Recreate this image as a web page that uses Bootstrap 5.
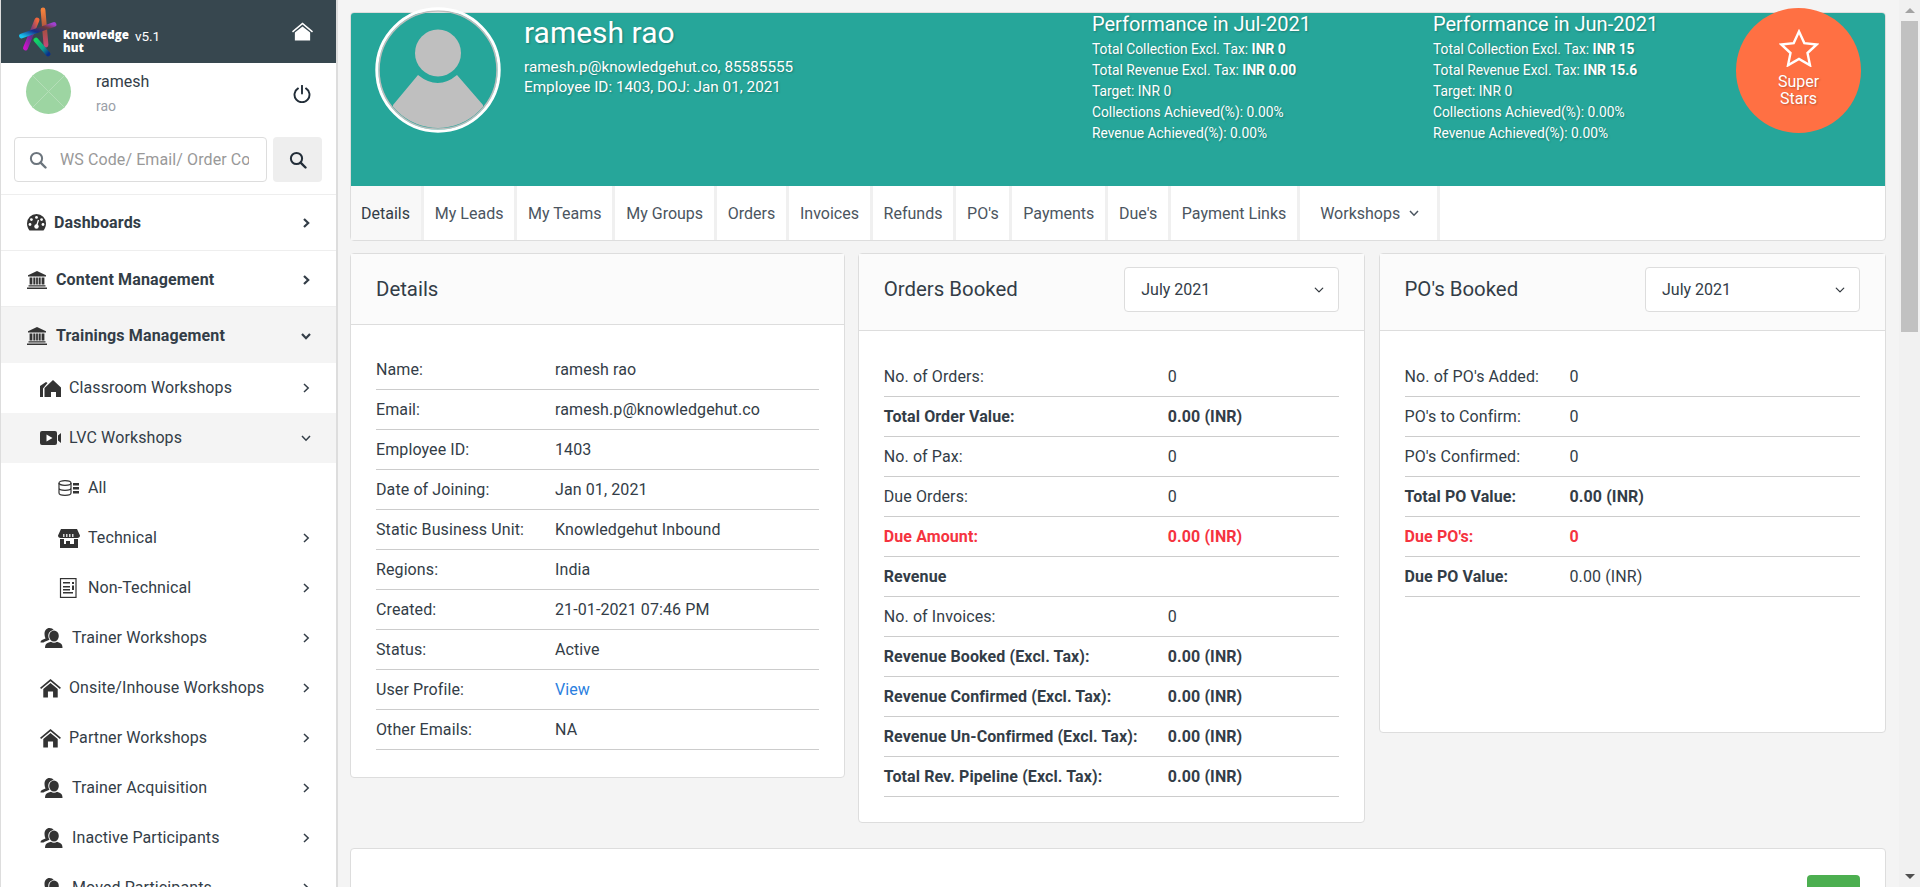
<!DOCTYPE html>
<html lang="en">
<head>
  <meta charset="UTF-8">
  <title>Employee Details</title>
  <link href="https://cdn.jsdelivr.net/npm/bootstrap@5.3.3/dist/css/bootstrap.min.css" rel="stylesheet">
  <style>
    body { font-family: Roboto, "Liberation Sans", sans-serif; font-size: 16px; color: #333d47; background: #f4f4f4; height: 887px; overflow: hidden; }
    svg { display: block; flex: none; }

    /* sidebar */
    .side-wrap { width: 338px; flex: none; height: 887px; background: #fff; border-left: 1px solid #ddd; border-right: 2px solid #ddd; overflow: hidden; }
    .side-top { height: 63px; background: #37474f; margin-left: -1px; padding: 0 23px 0 18px; }
    .logo-name { color: #fff; font-family: "Open Sans", sans-serif; font-weight: 800; font-size: 11.6px; line-height: 13px; margin-left: 3px; margin-top: 18px; }
    .logo-ver { color: #fff; font-size: 13.5px; margin-left: 6px; margin-top: 9px; }
    .user-box { padding: 6px 25px 0 25px; height: 74px; }
    .user-pic { width: 45px; height: 45px; border-radius: 50%; background: #9dd5a2; overflow: hidden; }
    .user-name { margin-left: 25px; line-height: 22px; margin-top: 2px; }
    .user-sub { font-size: 14px; color: #9aa0a8; margin-top: 3px; line-height: 20px; }
    .power-ico { margin-top: 16px; }
    .search-box { padding: 0 14px 12px 13px; border-bottom: 1px solid #eee; }
    .search-field { position: relative; width: 254px; }
    .search-field svg { position: absolute; left: 15px; top: 14px; }
    .search-field .form-control { height: 45px; padding: 0 17px 0 45px; font-size: 16px; letter-spacing: .1px; border-color: #ddd; border-radius: 4px; color: #333; }
    .search-field .form-control::placeholder { color: #999; opacity: 1; }
    .search-btn { width: 49px; height: 45px; background: #eee; border: 0; border-radius: 4px; margin-left: 6px; }
    .side-item { height: 50px; padding-right: 24px; color: #333d47; text-decoration: none; letter-spacing: .1px; }
    .side-item:hover { color: #333d47; }
    .side-item .arrow { margin-left: auto; }
    .top-level { height: 56px; padding-left: 26px; font-weight: 700; letter-spacing: .15px; border-bottom: 1px solid #eee; }
    .top-bank { padding-top: 2px; }
    .top-open { height: 56px; background: #f4f4f4; border-bottom: 0; }
    .sub-level { padding-left: 39px; }
    .sub-open { background: #f4f4f4; }
    .third-level { padding-left: 57px; }
    .ico-gap { margin-right: 8px; }
    .ico-gap-wide { margin-right: 9px; }

    /* hero */
    .page-wrap { width: 1561px; flex: none; padding: 12px 13px 0 12px; }
    .profile-card { border: 1px solid #ddd; border-radius: 4px; background: #fff; }
    .profile-band { height: 173px; background: #26a69a; color: #fff; text-shadow: 1px 1px 2px rgba(0,0,0,.25); padding-left: 24px; border-radius: 3px 3px 0 0; }
    .profile-pic { width: 126px; height: 126px; margin-top: -6px; margin-right: 23px; }
    .profile-main { width: 568px; padding-top: 3px; }
    .profile-name { font-size: 30px; line-height: 34px; font-weight: 400; margin: 0 0 7px; }
    .profile-line { line-height: 20px; font-size: 15.3px; }
    .perf-box { margin-top: -1px; font-size: 13.8px; line-height: 21px; }
    .perf-one { width: 341px; }
    .perf-two { width: 303px; }
    .perf-box h5 { font-size: 20px; line-height: 24px; font-weight: 400; margin: 0 0 2.5px; }
    .star-badge { width: 125px; height: 125px; border-radius: 50%; background: #ff7043; margin-top: -5px; font-size: 16px; line-height: 17px; text-align: center; padding-top: 21px; }
    .star-badge svg { margin: 0 auto 6px; }

    /* tabs */
    .tab-strip { height: 54px; }
    .tab-link { padding: 0 10.85px; height: 54px; line-height: 55px; border-right: 3px solid #f0f0f0; color: #4b5560; text-decoration: none; white-space: nowrap; }
    .tab-link:hover { color: #4b5560; }
    .tab-on { background: #f8f8f8; color: #333d47; padding: 0 11px 0 10px; }
    .tab-drop { padding: 0 17px 0 20px; }

    /* cards */
    .stat-grid { display: grid; grid-template-columns: 494.5px 507.5px 507.5px; column-gap: 13.25px; margin-top: 12px; align-items: start; }
    .stat-card { border: 1px solid #ddd; border-radius: 4px; background: #fff; }
    .stat-head { background: #fbfbfb; border-bottom: 1px solid #ddd; padding: 0 25px; height: 71px; font-size: 20.4px; }
    .stat-head-tall { height: 77px; padding-bottom: 5px; }
    .stat-head .form-select { width: 215px; height: 45px; padding-left: 16px; font-size: 16px; color: #333d47; border-color: #ddd; border-radius: 4px; background-size: 14px 10px; }
    .stat-body { padding: 25px 25px 27px; }
    .stat-body-tall { padding: 26px 25px 25px; }
    .stat-body-po { padding-bottom: 135px; }
    .stat-row { height: 40px; line-height: 39px; border-bottom: 1px solid #ccc; white-space: nowrap; letter-spacing: .1px; }
    .key-details { width: 179px; }
    .key-orders { width: 284px; }
    .key-po { width: 165px; }
    .row-bold { font-weight: 700; }
    .row-due { font-weight: 700; color: #f5333f; }
    .view-link { color: #2b7fe0; text-decoration: none; }
    .bottom-card { margin-top: 25px; height: 120px; padding: 26px 25px 0 0; }
    .add-btn { width: 53px; height: 50px; background: #4caf50; border: 0; border-radius: 4px; }

    /* scrollbar */
    .fake-scroll { width: 21px; flex: none; height: 887px; background: #f1f1f1; padding: 0 2px; }
    .scroll-up, .scroll-down { height: 21px; }
    .scroll-up i { border: 5px solid transparent; border-top: 0; border-bottom: 5px solid #a3a3a3; }
    .scroll-down i { border: 5px solid transparent; border-bottom: 0; border-top: 5px solid #505050; }
    .scroll-thumb { height: 311px; background: #c1c1c1; }
  </style>
</head>
<body>

<svg width="0" height="0" class="position-absolute">
  <defs>
    <symbol id="i-chev" viewBox="0 0 12 12"><path d="M4 2l4.200 4L4 10" fill="none" stroke="currentColor" stroke-width="1.500"/></symbol>
    <symbol id="i-chev-b" viewBox="0 0 12 12"><path d="M4 2l4.200 4L4 10" fill="none" stroke="currentColor" stroke-width="2.200"/></symbol>
    <symbol id="i-down" viewBox="0 0 12 12"><path d="M2 4l4 4.200L10 4" fill="none" stroke="currentColor" stroke-width="1.500"/></symbol>
    <symbol id="i-down-b" viewBox="0 0 12 12"><path d="M2 4l4 4.200L10 4" fill="none" stroke="currentColor" stroke-width="2.200"/></symbol>
    <symbol id="i-search" viewBox="0 0 18 18"><circle cx="7.500" cy="7.500" r="5.600" fill="none" stroke="currentColor" stroke-width="2"/><path d="M11.600 11.600L16.500 16.500" stroke="currentColor" stroke-width="2.400" stroke-linecap="round"/></symbol>
    <symbol id="i-bank" viewBox="0 0 20 18"><path fill="currentColor" d="M10 0L19 4.200V5.500H1V4.200zM2.600 6.500h2.800v7H2.600zM6.300 6.500h2.100v7H6.300zM11.600 6.500h2.100v7h-2.100zM14.600 6.500h2.800v7h-2.800zM9.100 6.500h1.800v7H9.100zM1.500 14.300h17v1.300h-17zM0 16.400h20V18H0z"/></symbol>
    <symbol id="i-friends" viewBox="0 0 22 20"><ellipse cx="13.500" cy="8" rx="4.800" ry="5.500" fill="currentColor"/><path fill="currentColor" d="M4.500 20c0-3 1-4.500 3-5.300l3-1c1.500 1.300 4.500 1.300 6 0l2.500 1c2 .8 3 2.300 3 5.300zM9 0c2 0 3.400.9 4.200 2-3.400.3-5.400 3-5.400 6 0 1.500.4 2.800 1.200 3.800l-3.500 1.400c-1 .4-1.800.8-2.500 1.300H0c0-1.500.8-2.300 2-2.800l3-1.200C4.300 9 4 7.500 4 6 4 2.500 6 0 9 0z"/></symbol>
    <symbol id="i-home" viewBox="0 0 22 20"><path fill="currentColor" d="M11 0L22 9.300l-1.100 1.300L11 2.400 1.100 10.600 0 9.300zM11 4.200l7.600 6.300V19.500h-4.900v-6.300H8.300v6.300H3.400v-9z"/></symbol>
  </defs>
</svg>

<div class="d-flex">
  <aside class="side-wrap">
    <div class="side-top d-flex align-items-center">
      <svg width="42" height="50" viewBox="0 0 42 50">
        <defs>
          <linearGradient id="lg1" x1="0" y1="0" x2="0" y2="1"><stop offset="0" stop-color="#f5823c"/><stop offset=".55" stop-color="#a5503f"/><stop offset="1" stop-color="#c24a74"/></linearGradient>
          <linearGradient id="lg2" x1="1" y1="0" x2="0" y2="1"><stop offset="0" stop-color="#f0663c"/><stop offset=".5" stop-color="#5a2f8c"/><stop offset="1" stop-color="#c813c8"/></linearGradient>
          <linearGradient id="lg3" x1="0" y1="1" x2="1" y2="0"><stop offset="0" stop-color="#19c3ee"/><stop offset=".4" stop-color="#14308c"/><stop offset=".75" stop-color="#6e3a3a"/><stop offset="1" stop-color="#a040d0"/></linearGradient>
          <linearGradient id="lg4" x1="0" y1="0" x2="1" y2="1"><stop offset="0" stop-color="#12d860"/><stop offset=".6" stop-color="#0f9f8c"/><stop offset="1" stop-color="#0a2f8c"/></linearGradient>
        </defs>
        <path d="M25 3L28 38" stroke="url(#lg1)" stroke-width="4.800" stroke-linecap="round" fill="none"/>
        <path d="M19 13L7.500 41" stroke="url(#lg2)" stroke-width="4.800" stroke-linecap="round" fill="none"/>
        <path d="M3.500 29L36 17.500" stroke="url(#lg3)" stroke-width="4.800" stroke-linecap="round" fill="none"/>
        <path d="M18 33L30 47" stroke="url(#lg4)" stroke-width="4.800" stroke-linecap="round" fill="none"/>
      </svg>
      <div class="logo-name">knowledge<br>hut</div>
      <div class="logo-ver">v5.1</div>
      <svg class="ms-auto" width="21" height="19" viewBox="0 0 22 19"><path fill="#fff" d="M11 0L22 9.300l-1 1.200L11 2.200 1 10.500 0 9.300zM11 4.200l8 6.300V18.800H3V10.500z"/></svg>
    </div>

    <div class="user-box d-flex">
      <div class="user-pic">
        <svg width="45" height="45" viewBox="0 0 45 45"><path d="M0 0L45 45M45 0L0 45" stroke="#b5deb8" stroke-width="1"/></svg>
      </div>
      <div class="user-name">
        <div>ramesh</div>
        <div class="user-sub">rao</div>
      </div>
      <svg class="ms-auto power-ico" width="18" height="18" viewBox="0 0 18 18"><path d="M5 3.400a7.500 7.500 0 1 0 8 0" fill="none" stroke="#222d38" stroke-width="1.900" stroke-linecap="round"/><path d="M9 .8V8.500" stroke="#222d38" stroke-width="1.900" stroke-linecap="round"/></svg>
    </div>

    <div class="search-box d-flex">
      <div class="search-field">
        <svg width="18" height="18" class="text-secondary"><use href="#i-search"/></svg>
        <input class="form-control" placeholder="WS Code/ Email/ Order Code">
      </div>
      <button class="search-btn d-flex align-items-center justify-content-center" type="button" aria-label="Search">
        <svg width="18" height="18" color="#222d38"><use href="#i-search"/></svg>
      </button>
    </div>

    <nav class="d-flex flex-column">
      <a class="side-item top-level d-flex align-items-center" href="#">
        <svg class="ico-gap" width="19" height="17" viewBox="0 0 19 17"><path fill="#333" d="M9.500 0a9.500 9.500 0 0 1 9.500 9.500c0 2.800-1 5-2.500 7H2.500C1 14.500 0 12.300 0 9.500A9.500 9.500 0 0 1 9.500 0z"/><circle cx="9.500" cy="3.400" r="1.400" fill="#fff"/><circle cx="4.400" cy="5.600" r="1.400" fill="#fff"/><circle cx="14.600" cy="5.600" r="1.400" fill="#fff"/><circle cx="3" cy="10.500" r="1.400" fill="#fff"/><circle cx="16" cy="10.500" r="1.400" fill="#fff"/><circle cx="9.500" cy="12.500" r="2.200" fill="#fff"/><path d="M9.500 12l2-6" stroke="#fff" stroke-width="1.300"/></svg>
        Dashboards
        <svg class="arrow" width="12" height="12"><use href="#i-chev-b"/></svg>
      </a>
      <a class="side-item top-level top-bank d-flex align-items-center" href="#">
        <svg class="ico-gap-wide" width="20" height="18" color="#333"><use href="#i-bank"/></svg>
        Content Management
        <svg class="arrow" width="12" height="12"><use href="#i-chev-b"/></svg>
      </a>
      <a class="side-item top-level top-open top-bank d-flex align-items-center" href="#">
        <svg class="ico-gap-wide" width="20" height="18" color="#333"><use href="#i-bank"/></svg>
        Trainings Management
        <svg class="arrow" width="12" height="12"><use href="#i-down-b"/></svg>
      </a>
      <a class="side-item sub-level d-flex align-items-center" href="#">
        <svg class="ico-gap" width="21" height="17" viewBox="0 0 21 17"><path fill="#333" d="M0 6L6 2l1.500 1L3 8.500V17H0zM13 0l8 7.500V17h-5v-5h-5v5H4.500V8z"/></svg>
        Classroom Workshops
        <svg class="arrow" width="12" height="12"><use href="#i-chev"/></svg>
      </a>
      <a class="side-item sub-level sub-open d-flex align-items-center" href="#">
        <svg class="ico-gap" width="21" height="14" viewBox="0 0 21 14"><path fill="#333" d="M2 0h13a2 2 0 0 1 2 2v10a2 2 0 0 1-2 2H2a2 2 0 0 1-2-2V2a2 2 0 0 1 2-2zM18 4.500L21 2v10l-3-2.500z"/><path fill="#fff" d="M6.500 3.500l6 3.500-6 3.500z"/></svg>
        LVC Workshops
        <svg class="arrow" width="12" height="12"><use href="#i-down"/></svg>
      </a>
      <a class="side-item third-level d-flex align-items-center" href="#">
        <svg class="ico-gap" width="22" height="16" viewBox="0 0 22 16"><g fill="none" stroke="#333" stroke-width="1.200"><ellipse cx="7" cy="3" rx="6" ry="2.300"/><path d="M1 3v10c0 1.300 2.700 2.300 6 2.300s6-1 6-2.300V3M1 8c0 1.300 2.700 2.300 6 2.300s6-1 6-2.300"/></g><path fill="#333" d="M15 3h6v2.500h-6zM15 7h6v2.500h-6zM15 11h6v2.500h-6z"/></svg>
        All
      </a>
      <a class="side-item third-level d-flex align-items-center" href="#">
        <svg class="ico-gap" width="22" height="19" viewBox="0 0 22 19"><path fill="#333" d="M3 0h16l3 6.500c0 1.500-1 2.500-2.500 2.500H2.500C1 9 0 8 0 6.500zM2 10h18v9H2z"/><path fill="#fff" d="M6 10h10v5H6z"/><path fill="#fff" d="M5 5h1.500v3H5zM8 5h1.500v3H8zM11 5h1.500v3H11zM14 5h1.500v3H14z" opacity=".8"/><path fill="#333" d="M8 12h4v3H8z"/></svg>
        Technical
        <svg class="arrow" width="12" height="12"><use href="#i-chev"/></svg>
      </a>
      <a class="side-item third-level d-flex align-items-center" href="#">
        <svg class="ico-gap" width="22" height="20" viewBox="0 0 22 20"><rect x="2.500" y=".6" width="15.500" height="18.800" fill="none" stroke="#333" stroke-width="1.200"/><path fill="#333" d="M5 4h7v1.500H5zM5 8h7v1.500H5zM5 11h7v1.500H5zM5 14h10v1.500H5zM14 4h2v2h-2zM14 7.500h2V12h-2z"/></svg>
        Non-Technical
        <svg class="arrow" width="12" height="12"><use href="#i-chev"/></svg>
      </a>
      <a class="side-item sub-level d-flex align-items-center" href="#">
        <svg class="ico-gap-wide" width="23" height="20" color="#333"><use href="#i-friends"/></svg>
        Trainer Workshops
        <svg class="arrow" width="12" height="12"><use href="#i-chev"/></svg>
      </a>
      <a class="side-item sub-level d-flex align-items-center" href="#">
        <svg class="ico-gap" width="21" height="19" color="#333"><use href="#i-home"/></svg>
        Onsite/Inhouse Workshops
        <svg class="arrow" width="12" height="12"><use href="#i-chev"/></svg>
      </a>
      <a class="side-item sub-level d-flex align-items-center" href="#">
        <svg class="ico-gap" width="21" height="19" color="#333"><use href="#i-home"/></svg>
        Partner Workshops
        <svg class="arrow" width="12" height="12"><use href="#i-chev"/></svg>
      </a>
      <a class="side-item sub-level d-flex align-items-center" href="#">
        <svg class="ico-gap-wide" width="23" height="20" color="#333"><use href="#i-friends"/></svg>
        Trainer Acquisition
        <svg class="arrow" width="12" height="12"><use href="#i-chev"/></svg>
      </a>
      <a class="side-item sub-level d-flex align-items-center" href="#">
        <svg class="ico-gap-wide" width="23" height="20" color="#333"><use href="#i-friends"/></svg>
        Inactive Participants
        <svg class="arrow" width="12" height="12"><use href="#i-chev"/></svg>
      </a>
      <a class="side-item sub-level d-flex align-items-center" href="#">
        <svg class="ico-gap-wide" width="23" height="20" color="#333"><use href="#i-friends"/></svg>
        Moved Participants
        <svg class="arrow" width="12" height="12"><use href="#i-chev"/></svg>
      </a>
    </nav>
  </aside>

  <main class="page-wrap">
    <section class="profile-card">
      <div class="profile-band d-flex">
        <svg class="profile-pic" viewBox="0 0 126 126">
          <defs><clipPath id="picclip"><circle cx="63" cy="63" r="58"/></clipPath></defs>
          <g clip-path="url(#picclip)" fill="#bfbfbf">
            <ellipse cx="63" cy="46" rx="23" ry="23.500"/>
            <path d="M43 68Q63 84 82 68L108 98V126H18V98z"/>
          </g>
          <circle cx="63" cy="63" r="59" fill="none" stroke="#bdbdbd" stroke-width="1.500"/>
          <circle cx="63" cy="63" r="61.200" fill="none" stroke="#fff" stroke-width="3"/>
        </svg>
        <div class="profile-main">
          <h2 class="profile-name">ramesh rao</h2>
          <div class="profile-line">ramesh.p@knowledgehut.co, 85585555</div>
          <div class="profile-line">Employee ID: 1403, DOJ: Jan 01, 2021</div>
        </div>
        <div class="perf-box perf-one">
          <h5>Performance in Jul-2021</h5>
          <div>Total Collection Excl. Tax: <b>INR 0</b></div>
          <div>Total Revenue Excl. Tax: <b>INR 0.00</b></div>
          <div>Target: INR 0</div>
          <div>Collections Achieved(%): 0.00%</div>
          <div>Revenue Achieved(%): 0.00%</div>
        </div>
        <div class="perf-box perf-two">
          <h5>Performance in Jun-2021</h5>
          <div>Total Collection Excl. Tax: <b>INR 15</b></div>
          <div>Total Revenue Excl. Tax: <b>INR 15.6</b></div>
          <div>Target: INR 0</div>
          <div>Collections Achieved(%): 0.00%</div>
          <div>Revenue Achieved(%): 0.00%</div>
        </div>
        <div class="star-badge">
          <svg width="40" height="38" viewBox="0 0 40 38"><path d="M20 2.500l5.300 11.600 12.400 1.400-9.200 8.500 2.500 12.300L20 29.900 9 36.300l2.500-12.300-9.200-8.500 12.400-1.400z" fill="none" stroke="#fff" stroke-width="2.400" stroke-linejoin="miter"/></svg>
          <div>Super<br>Stars</div>
        </div>
      </div>
      <div class="tab-strip d-flex">
        <a class="tab-link tab-on" href="#">Details</a>
        <a class="tab-link" href="#">My Leads</a>
        <a class="tab-link" href="#">My Teams</a>
        <a class="tab-link" href="#">My Groups</a>
        <a class="tab-link" href="#">Orders</a>
        <a class="tab-link" href="#">Invoices</a>
        <a class="tab-link" href="#">Refunds</a>
        <a class="tab-link" href="#">PO's</a>
        <a class="tab-link" href="#">Payments</a>
        <a class="tab-link" href="#">Due's</a>
        <a class="tab-link" href="#">Payment Links</a>
        <a class="tab-link tab-drop d-flex align-items-center gap-2" href="#">Workshops <svg width="12" height="12"><use href="#i-down"/></svg></a>
      </div>
    </section>

    <div class="stat-grid">
      <section class="stat-card">
        <div class="stat-head d-flex align-items-center">Details</div>
        <div class="stat-body">
          <div class="stat-row d-flex"><div class="key-details">Name:</div><div>ramesh rao</div></div>
          <div class="stat-row d-flex"><div class="key-details">Email:</div><div>ramesh.p@knowledgehut.co</div></div>
          <div class="stat-row d-flex"><div class="key-details">Employee ID:</div><div>1403</div></div>
          <div class="stat-row d-flex"><div class="key-details">Date of Joining:</div><div>Jan 01, 2021</div></div>
          <div class="stat-row d-flex"><div class="key-details">Static Business Unit:</div><div>Knowledgehut Inbound</div></div>
          <div class="stat-row d-flex"><div class="key-details">Regions:</div><div>India</div></div>
          <div class="stat-row d-flex"><div class="key-details">Created:</div><div>21-01-2021 07:46 PM</div></div>
          <div class="stat-row d-flex"><div class="key-details">Status:</div><div>Active</div></div>
          <div class="stat-row d-flex"><div class="key-details">User Profile:</div><div><a class="view-link" href="#">View</a></div></div>
          <div class="stat-row d-flex"><div class="key-details">Other Emails:</div><div>NA</div></div>
        </div>
      </section>

      <section class="stat-card">
        <div class="stat-head stat-head-tall d-flex align-items-center justify-content-between">
          <span>Orders Booked</span>
          <select class="form-select"><option>July 2021</option></select>
        </div>
        <div class="stat-body stat-body-tall">
          <div class="stat-row d-flex"><div class="key-orders">No. of Orders:</div><div>0</div></div>
          <div class="stat-row d-flex row-bold"><div class="key-orders">Total Order Value:</div><div>0.00 (INR)</div></div>
          <div class="stat-row d-flex"><div class="key-orders">No. of Pax:</div><div>0</div></div>
          <div class="stat-row d-flex"><div class="key-orders">Due Orders:</div><div>0</div></div>
          <div class="stat-row d-flex row-due"><div class="key-orders">Due Amount:</div><div>0.00 (INR)</div></div>
          <div class="stat-row d-flex row-bold"><div class="key-orders">Revenue</div></div>
          <div class="stat-row d-flex"><div class="key-orders">No. of Invoices:</div><div>0</div></div>
          <div class="stat-row d-flex row-bold"><div class="key-orders">Revenue Booked (Excl. Tax):</div><div>0.00 (INR)</div></div>
          <div class="stat-row d-flex row-bold"><div class="key-orders">Revenue Confirmed (Excl. Tax):</div><div>0.00 (INR)</div></div>
          <div class="stat-row d-flex row-bold"><div class="key-orders">Revenue Un-Confirmed (Excl. Tax):</div><div>0.00 (INR)</div></div>
          <div class="stat-row d-flex row-bold"><div class="key-orders">Total Rev. Pipeline (Excl. Tax):</div><div>0.00 (INR)</div></div>
        </div>
      </section>

      <section class="stat-card">
        <div class="stat-head stat-head-tall d-flex align-items-center justify-content-between">
          <span>PO's Booked</span>
          <select class="form-select"><option>July 2021</option></select>
        </div>
        <div class="stat-body stat-body-tall stat-body-po">
          <div class="stat-row d-flex"><div class="key-po">No. of PO's Added:</div><div>0</div></div>
          <div class="stat-row d-flex"><div class="key-po">PO's to Confirm:</div><div>0</div></div>
          <div class="stat-row d-flex"><div class="key-po">PO's Confirmed:</div><div>0</div></div>
          <div class="stat-row d-flex row-bold"><div class="key-po">Total PO Value:</div><div>0.00 (INR)</div></div>
          <div class="stat-row d-flex row-due"><div class="key-po">Due PO's:</div><div>0</div></div>
          <div class="stat-row d-flex"><div class="key-po fw-bold">Due PO Value:</div><div>0.00 (INR)</div></div>
        </div>
      </section>
    </div>

    <section class="stat-card bottom-card d-flex justify-content-end">
      <button class="add-btn" type="button" aria-label="Add"></button>
    </section>
  </main>

  <div class="fake-scroll d-flex flex-column">
    <div class="scroll-up d-flex align-items-center justify-content-center"><i></i></div>
    <div class="scroll-thumb"></div>
    <div class="flex-grow-1"></div>
    <div class="scroll-down d-flex align-items-center justify-content-center"><i></i></div>
  </div>
</div>

<script src="https://cdn.jsdelivr.net/npm/bootstrap@5.3.3/dist/js/bootstrap.bundle.min.js"></script>
</body>
</html>
